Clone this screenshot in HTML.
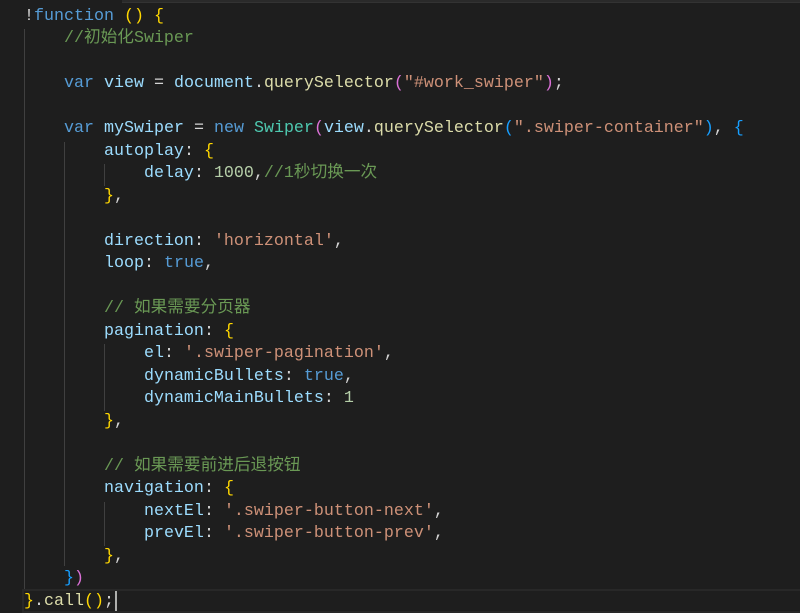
<!DOCTYPE html><html><head><meta charset="utf-8"><style>
body{margin:0;width:800px;height:613px;background:#1e1e1e;overflow:hidden;position:relative}
pre{margin:0;position:absolute;left:24px;top:5.75px;font:16.67px/22.5px "Liberation Mono","Noto Sans CJK SC",monospace;color:#d4d4d4;white-space:pre}
.k{color:#569cd6}.f{color:#dcdcaa}.v{color:#9cdcfe}.s{color:#ce9178}.c{color:#6a9955}.n{color:#b5cea8}.t{color:#4ec9b0}
.g{color:#ffd700}.o{color:#da70d6}.b{color:#179fff}
.guide{position:absolute;width:1px;background:#404040}
</style></head><body>
<div style="position:absolute;left:122px;top:0;width:678px;height:2px;background:#2a2a2a;border-bottom:1px solid #333"></div>
<div style="position:absolute;left:22px;top:589px;width:778px;height:20px;border:2px solid #282828;border-right:none"></div>
<div class="guide" style="left:24px;top:29px;height:560px"></div>
<div class="guide" style="left:64px;top:142px;height:424px"></div>
<div class="guide" style="left:104px;top:164px;height:22px"></div>
<div class="guide" style="left:104px;top:344px;height:67px"></div>
<div class="guide" style="left:104px;top:502px;height:44px"></div>
<div style="position:absolute;left:115px;top:591px;width:2px;height:20px;background:#aeafad"></div>
<pre>!<span class="k">function</span> <span class="g">()</span> <span class="g">{</span>
    <span class="c">//初始化Swiper</span>

    <span class="k">var</span> <span class="v">view</span> = <span class="v">document</span>.<span class="f">querySelector</span><span class="o">(</span><span class="s">"#work_swiper"</span><span class="o">)</span>;

    <span class="k">var</span> <span class="v">mySwiper</span> = <span class="k">new</span> <span class="t">Swiper</span><span class="o">(</span><span class="v">view</span>.<span class="f">querySelector</span><span class="b">(</span><span class="s">".swiper-container"</span><span class="b">)</span>, <span class="b">{</span>
        <span class="v">autoplay</span>: <span class="g">{</span>
            <span class="v">delay</span>: <span class="n">1000</span>,<span class="c">//1秒切换一次</span>
        <span class="g">}</span>,

        <span class="v">direction</span>: <span class="s">'horizontal'</span>,
        <span class="v">loop</span>: <span class="k">true</span>,

        <span class="c">// 如果需要分页器</span>
        <span class="v">pagination</span>: <span class="g">{</span>
            <span class="v">el</span>: <span class="s">'.swiper-pagination'</span>,
            <span class="v">dynamicBullets</span>: <span class="k">true</span>,
            <span class="v">dynamicMainBullets</span>: <span class="n">1</span>
        <span class="g">}</span>,

        <span class="c">// 如果需要前进后退按钮</span>
        <span class="v">navigation</span>: <span class="g">{</span>
            <span class="v">nextEl</span>: <span class="s">'.swiper-button-next'</span>,
            <span class="v">prevEl</span>: <span class="s">'.swiper-button-prev'</span>,
        <span class="g">}</span>,
    <span class="b">}</span><span class="o">)</span>
<span class="g">}</span>.<span class="f">call</span><span class="g">()</span>;</pre>
</body></html>
